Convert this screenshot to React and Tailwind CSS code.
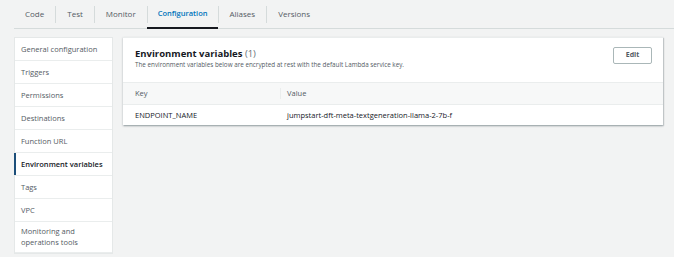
import React from 'react';

const tabs = ['Code', 'Test', 'Monitor', 'Configuration', 'Aliases', 'Versions'];

const navItems = [
  'General configuration',
  'Triggers',
  'Permissions',
  'Destinations',
  'Function URL',
  'Environment variables',
  'Tags',
  'VPC',
  'Monitoring and operations tools',
];

export default function App() {
  return (
    <div
      className="w-[674px] h-[257px] overflow-hidden bg-[#f2f3f3] text-[#16191f]"
      style={{ fontFamily: '"Open Sans", "Liberation Sans", sans-serif' }}
    >
      {/* Tab bar */}
      <div className="ml-[14px] flex h-[29px] border-b border-[#d5dbdb]">
        {tabs.map((t, i) => {
          const active = t === 'Configuration';
          return (
            <div key={t} className="relative flex items-center">
              {i > 0 && <div className="h-[17px] w-px bg-[#d5dbdb]" />}
              <div
                className={`flex h-full items-center ${
                  active ? 'px-[10px] text-[7.5px] font-semibold text-[#0073bb]' : 'px-[11px] text-[8px] text-[#545b64]'
                }`}
              >
                {t}
              </div>
              {active && <div className="absolute bottom-[-1px] left-0 right-0 h-[2px] bg-[#16191f]" />}
            </div>
          );
        })}
      </div>

      <div className="mt-[8px] flex gap-[10px] pl-[14px]">
        {/* Side nav */}
        <div className="w-[99px] shrink-0 border border-[#e5e8e8] bg-white">
          {navItems.map((n) => {
            const active = n === 'Environment variables';
            return (
              <div
                key={n}
                className={`relative flex min-h-[23px] items-center border-b border-[#eaeded] px-[6px] py-[4px] text-[7.5px] leading-[11px] ${
                  active ? 'font-semibold text-[#16191f]' : 'text-[#545b64]'
                }`}
              >
                {active && <div className="absolute left-[-1px] top-0 bottom-0 w-[2px] bg-[#1d4f7a]" />}
                {n === 'Monitoring and operations tools' ? (
                  <span>
                    Monitoring and
                    <br />
                    operations tools
                  </span>
                ) : (
                  n
                )}
              </div>
            );
          })}
        </div>

        {/* Panel */}
        <div className="h-[88px] w-[540px] bg-white shadow-[0_1px_2px_rgba(0,28,36,0.3),1px_1px_1px_rgba(0,28,36,0.12)] border-t border-[#eaeded]">
          <div className="flex h-[45px] items-start justify-between border-b border-[#eaeded] px-[12px] pt-[9px]">
            <div>
              <div className="text-[9.5px] font-bold leading-[13px]">
                Environment variables <span className="font-normal text-[#687078]">(1)</span>
              </div>
              <div className="mt-[1px] text-[6.3px] leading-[8px] text-[#545b64]">
                The environment variables below are encrypted at rest with the default Lambda service key.
              </div>
            </div>
            <div className="mr-[-1px] flex h-[17px] w-[39px] items-center justify-center rounded-[2px] border border-[#aab7b8] text-[7px] font-bold text-[#545b64]">
              Edit
            </div>
          </div>
          <div className="flex h-[22px] items-center border-b border-[#eaeded] bg-[#f7f8f8] text-[7.5px] text-[#545b64]">
            <div className="w-[157px] pl-[12px]">Key</div>
            <div className="h-[11px] w-px bg-[#eaeded]" />
            <div className="pl-[6px]">Value</div>
          </div>
          <div className="flex h-[21px] items-center text-[7.5px] text-[#16191f]">
            <div className="w-[158px] pl-[12px]">ENDPOINT_NAME</div>
            <div className="pl-[6px]">jumpstart-dft-meta-textgeneration-llama-2-7b-f</div>
          </div>
        </div>
      </div>
    </div>
  );
}
